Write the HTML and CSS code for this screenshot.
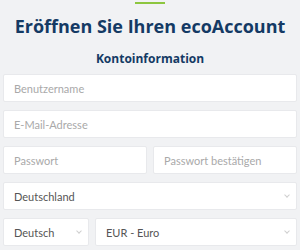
FILE: index.html
```html
<!DOCTYPE html>
<html lang="de">
<head>
    <meta charset="UTF-8">
    <title>ecoAccount</title>
    <link rel="stylesheet" href="styles.css">
</head>
<body>
    <div class="accent"></div>
    <h1 class="title">Eröffnen Sie Ihren ecoAccount</h1>
    <h2 class="subtitle">Kontoinformation</h2>
    <form class="form">
        <div class="field"><span class="placeholder">Benutzername</span></div>
        <div class="field"><span class="placeholder">E-Mail-Adresse</span></div>
        <div class="row">
            <div class="field"><span class="placeholder">Passwort</span></div>
            <div class="field"><span class="placeholder">Passwort bestätigen</span></div>
        </div>
        <div class="field select"><span class="value">Deutschland</span><span class="chevron"></span></div>
        <div class="row row-lang">
            <div class="field select"><span class="value">Deutsch</span><span class="chevron"></span></div>
            <div class="field select"><span class="value">EUR - Euro</span><span class="chevron"></span></div>
        </div>
    </form>
</body>
</html>
```

FILE: styles.css
```css
body {
    margin: 0;
    padding: 2px 3px 0;
    background-color: #f1f2f4;
    font-family: "Open Sans", sans-serif;
}
.accent {
    width: 30px;
    height: 2px;
    margin: 0 auto;
    background: #8dc63f;
}
.title {
    margin: 10px 0 0;
    font-size: 18px;
    line-height: 24px;
    font-weight: 700;
    text-align: center;
    white-space: nowrap;
    color: #143a64;
}
.subtitle {
    margin: 13px 0 0;
    font-size: 12px;
    line-height: 16px;
    font-weight: 700;
    text-align: center;
    color: #143a64;
}
.form {
    display: flex;
    flex-direction: column;
    gap: 8px;
    margin-top: 7px;
}
.row {
    display: flex;
    gap: 6px;
}
.row .field {
    flex: 1;
}
.row-lang .field:first-child {
    flex: 0 0 86px;
}
.field {
    height: 28px;
    box-sizing: border-box;
    padding: 0 10px;
    display: flex;
    align-items: center;
    justify-content: space-between;
    background: #fff;
    border: 1px solid #e8e9ec;
    border-radius: 2px;
    font-family: Lato, sans-serif;
    font-size: 11px;
}
.select {
    padding-right: 7px;
}
.placeholder {
    color: #a9a9a9;
}
.value {
    color: #555;
}
.chevron {
    width: 3px;
    height: 3px;
    margin-bottom: 2px;
    border-right: 1px solid #cfcfcf;
    border-bottom: 1px solid #cfcfcf;
    transform: rotate(45deg);
}
```
